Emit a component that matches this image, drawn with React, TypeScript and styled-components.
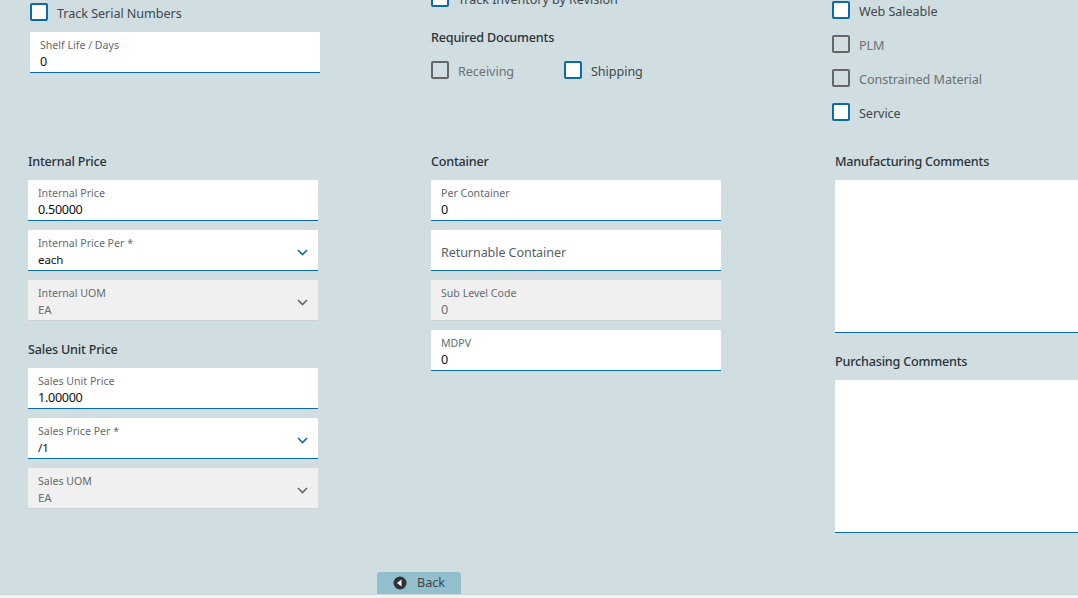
import React from "react";
import styled, { createGlobalStyle } from "styled-components";

const Global = createGlobalStyle`
  html, body { margin: 0; padding: 0; height: 100%; background: #d0dde1; overflow: hidden; }
  body { font-family: "Noto Sans", "Open Sans", sans-serif; }
`;

const Page = styled.div`
  width: 1078px; height: 598px; overflow: hidden; display: flex; flex-direction: column;
  background: #d0dde1; position: relative;
`;
const Content = styled.main`
  flex: 1; min-height: 0; margin-top: -11px; overflow: hidden;
`;
const TopGrid = styled.section`
  display: grid; grid-template-columns: 403px 404px 243px; padding-left: 28px; height: 164px;
`;
const BottomGrid = styled.section`
  display: grid; grid-template-columns: 403px 404px 243px; padding-left: 28px;
`;
const Col = styled.div<{ $pad?: number; $top?: number }>`
  display: flex; flex-direction: column; margin-left: ${p => p.$pad ?? 0}px; padding-top: ${p => p.$top ?? 0}px; min-width: 0;
`;
const CheckRow = styled.label<{ $h?: number }>`
  display: flex; align-items: center; height: 18px; margin-bottom: ${p => p.$h ?? 16}px;
`;
const Box = styled.span<{ $off?: boolean }>`
  width: 18px; height: 18px; box-sizing: border-box; flex: none; border-radius: 2px;
  border: 2px solid ${p => (p.$off ? "#666" : "#0b6ca3")};
  background: ${p => (p.$off ? "transparent" : "#fff")};
`;
const CheckText = styled.span<{ $off?: boolean }>`
  margin-left: 9px; padding-top: 4px; font-size: 12.6px; line-height: 18px; letter-spacing: -0.05px; white-space: nowrap;
  color: ${p => (p.$off ? "#6d7173" : "#41474b")};
`;
const InlineChecks = styled.div`
  display: flex; gap: 0;
`;
const InlineItem = styled.div<{ $w: number }>`
  width: ${p => p.$w}px;
`;
const Heading = styled.h3<{ $mb?: number }>`
  margin: 0 0 ${p => p.$mb ?? 0}px; font-size: 12.6px; line-height: 18px; font-weight: 500;
  letter-spacing: -0.2px; color: #2b3337; white-space: nowrap;
`;
const Field = styled.div<{ $off?: boolean; $gap?: number }>`
  position: relative; box-sizing: border-box; width: 290px; height: 41px; padding: 5px 10px 0;
  margin-bottom: ${p => p.$gap ?? 9}px;
  background: ${p => (p.$off ? "#f0f0f0" : "#fff")};
  border-bottom: 1px solid ${p => (p.$off ? "#cfd1d2" : "#0a6ca8")};
`;
const FieldLabel = styled.div`
  font-size: 10.6px; line-height: 16px; color: #666b6f; white-space: nowrap;
`;
const FieldValue = styled.div<{ $off?: boolean; $small?: boolean }>`
  font-size: ${p => (p.$small ? 11.5 : 12.6)}px; line-height: 17px; white-space: nowrap;
  letter-spacing: ${p => (p.$small ? "-0.1px" : "-0.3px")};
  color: ${p => (p.$off ? "#6a6f72" : "#111")};
`;
const Placeholder = styled.div`
  font-size: 12.6px; line-height: 38px; margin-top: -1px; letter-spacing: -0.1px; color: #5a6064;
`;
const Chevron = styled.svg<{ $off?: boolean }>`
  position: absolute; right: 10px; top: 19px; width: 11px; height: 7px; fill: none;
  stroke: ${p => (p.$off ? "#666" : "#0b6ca3")}; stroke-width: 1.6;
`;
const Comment = styled.div<{ $gap?: number }>`
  box-sizing: border-box; width: 243px; height: 153px; background: #fff; border-bottom: 1px solid #0a6ca8;
  margin-bottom: ${p => p.$gap ?? 0}px;
`;
const Footer = styled.footer`
  flex: none; height: 26px; display: flex; align-items: flex-end; padding-left: 377px;
`;
const Strip = styled.div`
  flex: none; height: 4px; box-sizing: border-box; background: #eef2f4; border-top: 1px solid #cbd8d8;
`;
const Back = styled.button`
  display: flex; align-items: center; box-sizing: border-box; width: 84px; height: 22px; border: 0; padding: 0 0 0 16px;
  border-radius: 3px 3px 0 0; background: #93bfcd; color: #3c4448;
  font: 12.6px/22px "Noto Sans", sans-serif;
`;
const BackIcon = styled.svg`
  width: 14px; height: 14px; margin-right: 10px; flex: none;
`;

const Down = ({ off }: { off?: boolean }) => (
  <Chevron $off={off} viewBox="0 0 11 7"><path d="M1 1l4.5 4.5L10 1" /></Chevron>
);

const Check = ({ text, off, gap }: { text: string; off?: boolean; gap?: number }) => (
  <CheckRow $h={gap}><Box $off={off} /><CheckText $off={off}>{text}</CheckText></CheckRow>
);

const F = ({ label, value, off, select, small, gap }: { label: string; value: string; off?: boolean; select?: boolean; small?: boolean; gap?: number }) => (
  <Field $off={off} $gap={gap}>
    <FieldLabel>{label}</FieldLabel>
    <FieldValue $off={off} $small={small}>{value}</FieldValue>
    {select && <Down off={off} />}
  </Field>
);

export default function App() {
  return (
    <Page>
      <Global />
      <Content>
        <TopGrid>
          <Col $pad={2} $top={14}>
            <Check text="Track Serial Numbers" gap={11} />
            <F label="Shelf Life / Days" value="0" />
          </Col>
          <Col>
            <Check text="Track Inventory by Revision" gap={22} />
            <Heading $mb={14}>Required Documents</Heading>
            <InlineChecks>
              <InlineItem $w={133}><Check text="Receiving" off /></InlineItem>
              <InlineItem $w={150}><Check text="Shipping" /></InlineItem>
            </InlineChecks>
          </Col>
          <Col $pad={-3} $top={12}>
            <Check text="Web Saleable" />
            <Check text="PLM" off />
            <Check text="Constrained Material" off />
            <Check text="Service" />
          </Col>
        </TopGrid>
        <BottomGrid>
          <Col>
            <Heading $mb={9}>Internal Price</Heading>
            <F label="Internal Price" value="0.50000" />
            <F label="Internal Price Per *" value="each" select small />
            <F label="Internal UOM" value="EA" off select small gap={20} />
            <Heading $mb={9}>Sales Unit Price</Heading>
            <F label="Sales Unit Price" value="1.00000" />
            <F label="Sales Price Per *" value="/1" select small />
            <F label="Sales UOM" value="EA" off select small />
          </Col>
          <Col>
            <Heading $mb={9}>Container</Heading>
            <F label="Per Container" value="0" />
            <Field><Placeholder>Returnable Container</Placeholder></Field>
            <F label="Sub Level Code" value="0" off />
            <F label="MDPV" value="0" />
          </Col>
          <Col>
            <Heading $mb={9}>Manufacturing Comments</Heading>
            <Comment $gap={20} />
            <Heading $mb={9}>Purchasing Comments</Heading>
            <Comment />
          </Col>
        </BottomGrid>
      </Content>
      <Footer>
        <Back>
          <BackIcon viewBox="0 0 14 14">
            <circle cx="7" cy="7" r="6.5" fill="#2f3336" />
            <path d="M4 7l4.5-3.6v7.2z" fill="#fff" />
          </BackIcon>
          Back
        </Back>
      </Footer>
      <Strip />
    </Page>
  );
}
